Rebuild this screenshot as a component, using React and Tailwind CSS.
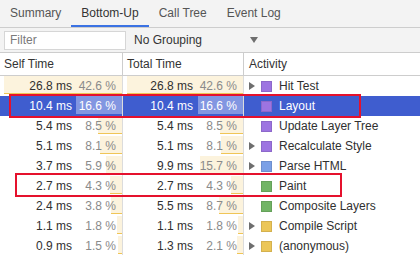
import React from 'react';

const PURPLE = '#9d74e1';
const BLUE = '#7ba0e6';
const GREEN = '#71b465';
const YELLOW = '#ecc658';

const rows = [
  { self: '26.8', selfP: 42.6, total: '26.8', totalP: 42.6, name: 'Hit Test', color: PURPLE, arrow: true },
  { self: '10.4', selfP: 16.6, total: '10.4', totalP: 16.6, name: 'Layout', color: PURPLE, selected: true },
  { self: '5.4', selfP: 8.5, total: '5.4', totalP: 8.5, name: 'Update Layer Tree', color: PURPLE },
  { self: '5.1', selfP: 8.1, total: '5.1', totalP: 8.1, name: 'Recalculate Style', color: PURPLE, arrow: true },
  { self: '3.7', selfP: 5.9, total: '9.9', totalP: 15.7, name: 'Parse HTML', color: BLUE, arrow: true },
  { self: '2.7', selfP: 4.3, total: '2.7', totalP: 4.3, name: 'Paint', color: GREEN },
  { self: '2.4', selfP: 3.8, total: '5.5', totalP: 8.7, name: 'Composite Layers', color: GREEN },
  { self: '1.1', selfP: 1.8, total: '1.1', totalP: 1.8, name: 'Compile Script', color: YELLOW, arrow: true },
  { self: '0.9', selfP: 1.5, total: '1.3', totalP: 2.1, name: '(anonymous)', color: YELLOW, arrow: true },
];

const MAX = 42.6;

const TimeCell = ({ ms, pct, selected, width }) => (
  <div className={`relative h-full border-r border-[#dcdcdc] ${width}`}>
    {/* percentage bar sits behind the numbers */}
    <div className="absolute top-0 bottom-0 left-[4px] right-0">
      <div
        className={`absolute top-0 right-0 h-[18px] ${
          selected ? 'bg-[#8296e1]' : 'bg-[#fcf3dd] border-b border-[#f0c556]'
        }`}
        style={{ width: `${(pct / MAX) * 100}%` }}
      />
    </div>
    <div className={`relative flex h-full items-center justify-end ${selected ? 'text-white' : ''}`}>
      <span className={selected ? 'text-white' : 'text-[#303030]'}>{ms} ms</span>
      <span className={`w-[50px] pr-[6px] text-right ${selected ? 'text-white' : 'text-[#8a8a8a]'}`}>
        {pct.toFixed(1)} %
      </span>
    </div>
  </div>
);

const Arrow = () => (
  <svg width="6" height="8" viewBox="0 0 6 8" className="block">
    <path d="M0 0 L6 4 L0 8 Z" fill="#6e6e6e" />
  </svg>
);

const Row = ({ row }) => (
  <div className={`flex h-[20px] ${row.selected ? 'bg-[#3f5dcf]' : 'bg-white'}`}>
    <TimeCell ms={row.self} pct={row.selfP} selected={row.selected} width="w-[123px]" />
    <TimeCell ms={row.total} pct={row.totalP} selected={row.selected} width="w-[121px]" />
    <div className="flex flex-1 items-center pl-[5px]">
      <div className="w-[12px]">{row.arrow && <Arrow />}</div>
      <div
        className="h-[11px] w-[11px] border border-black/10"
        style={{ backgroundColor: row.color }}
      />
      <span className={`ml-[7px] ${row.selected ? 'text-white' : 'text-[#303030]'}`}>{row.name}</span>
    </div>
  </div>
);

const tabs = ['Summary', 'Bottom-Up', 'Call Tree', 'Event Log'];

export default function App() {
  return (
    <div
      className="relative h-[255px] w-[420px] overflow-hidden bg-white text-[12px] leading-none"
      style={{ fontFamily: '"Liberation Sans", Arial, sans-serif' }}
    >
      {/* tabs */}
      <div className="flex h-[28px] border-b border-[#cdcdcd] bg-[#f3f3f3]">
        {tabs.map((t) => (
          <div
            key={t}
            className={`flex items-center px-[10px] border-b-2 ${
              t === 'Bottom-Up' ? 'border-[#3b72e3] text-[#333]' : 'border-transparent text-[#555]'
            }`}
          >
            {t}
          </div>
        ))}
      </div>

      {/* toolbar */}
      <div className="flex h-[25px] items-center border-b border-[#cdcdcd] bg-[#f3f3f3]">
        <div className="ml-[4px] flex h-[19px] w-[122px] items-center border border-[#d6d6d6] bg-white pl-[5px] text-[#7a7a7a]">
          Filter
        </div>
        <div className="ml-[8px] text-[#333]">No Grouping</div>
        <svg width="8" height="6" viewBox="0 0 8 6" className="ml-[48px]">
          <path d="M0 0 L8 0 L4 6 Z" fill="#6e6e6e" />
        </svg>
      </div>

      {/* header */}
      <div className="flex h-[23px] border-b border-[#cdcdcd] text-[#333]">
        <div className="flex w-[123px] items-center border-r border-[#cdcdcd] pl-[4px]">Self Time</div>
        <div className="flex w-[121px] items-center border-r border-[#cdcdcd] pl-[4px]">Total Time</div>
        <div className="flex flex-1 items-center pl-[5px]">Activity</div>
      </div>

      {rows.map((r) => (
        <Row key={r.name} row={r} />
      ))}

      {/* red highlight boxes drawn over the grid */}
      <div className="pointer-events-none absolute left-[9px] top-[94px] h-[24px] w-[352px] border-2 border-[#e5112d]" />
      <div className="pointer-events-none absolute left-[15px] top-[173px] h-[24px] w-[327px] border-2 border-[#e5112d]" />
    </div>
  );
}
